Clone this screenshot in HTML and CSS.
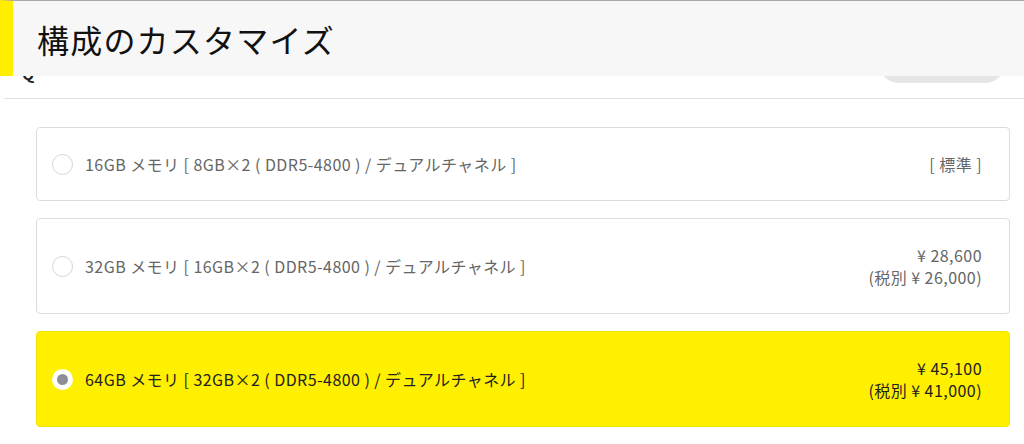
FILE: index.html
```html
<!DOCTYPE html>
<html lang="ja">
<head>
  <meta charset="UTF-8" />
  <title>構成のカスタマイズ</title>
  <link rel="stylesheet" href="styles.css">
</head>
<body>
  <div class="custom-wrap">
    <div class="custom-head">
      <h2>構成のカスタマイズ</h2>
    </div>

    <div class="toolbar">
      <span class="tool-icon">Q</span>
      <button class="pill" type="button">リセット</button>
    </div>

    <form class="options">
      <label class="option">
        <span class="radio"></span>
        <span class="name">16GB メモリ [ 8GB×2 ( DDR5-4800 ) / デュアルチャネル ]</span>
        <span class="price">[ 標準 ]</span>
      </label>

      <label class="option">
        <span class="radio"></span>
        <span class="name">32GB メモリ [ 16GB×2 ( DDR5-4800 ) / デュアルチャネル ]</span>
        <span class="price">¥ 28,600<br>(税別 ¥ 26,000)</span>
      </label>

      <label class="option selected">
        <span class="radio"></span>
        <span class="name">64GB メモリ [ 32GB×2 ( DDR5-4800 ) / デュアルチャネル ]</span>
        <span class="price">¥ 45,100<br>(税別 ¥ 41,000)</span>
      </label>
    </form>
  </div>
</body>
</html>
```

FILE: styles.css
```css
* {
  margin: 0; padding: 0; box-sizing: border-box;
  font-family: 'Noto Sans CJK JP', 'Noto Sans', sans-serif;
}

body {
  background: #fff;
  color: #222;
}

.custom-wrap {
  position: relative;
  width: 1024px;
}

.custom-head {
  position: absolute;
  top: 0;
  left: 0;
  right: 0;
  height: 76px;
  background: #f7f7f7;
  border-top: 1px solid #a9a9a9;
  border-left: 13px solid #ffee00;
  display: flex;
  align-items: center;
  padding-left: 24px;
  z-index: 2;
}

.custom-head h2 {
  font-size: 32px;
  font-weight: 400;
  color: #111;
  letter-spacing: 1.2px;
}

.toolbar {
  height: 99px;
  display: flex;
  align-items: flex-end;
  justify-content: space-between;
  padding: 0 19px 15px 18px;
  border-bottom: 1px solid #e0e0e0;
  margin-left: 4px;
}

.tool-icon {
  font-size: 16px;
  font-weight: 700;
  line-height: 1;
  margin-bottom: 2px;
}

.pill {
  width: 126px;
  height: 40px;
  border: none;
  border-radius: 20px;
  background: #e6e6e6;
  color: #666;
  font-size: 14px;
}

.options {
  display: flex;
  flex-direction: column;
  gap: 17px;
  padding: 28px 14px 0 36px;
}

.option {
  display: flex;
  align-items: center;
  padding: 25px 27px 25px 15px;
  border: 1px solid #dcdcdc;
  border-radius: 4px;
  color: #666;
  font-size: 16px;
  line-height: 22px;
  letter-spacing: 0.45px;
  cursor: pointer;
}

.radio {
  width: 21px;
  height: 21px;
  border: 1px solid #d4d4d4;
  border-radius: 50%;
  background: #fff;
  margin-right: 12px;
  flex-shrink: 0;
}

.name {
  flex: 1;
}

.price {
  text-align: right;
}

.option.selected {
  background: #fff000;
  border-color: #f2e600;
  color: #222;
}

.option.selected .radio {
  border: 5px solid #fff;
  background: #8e8e96;
}
```
